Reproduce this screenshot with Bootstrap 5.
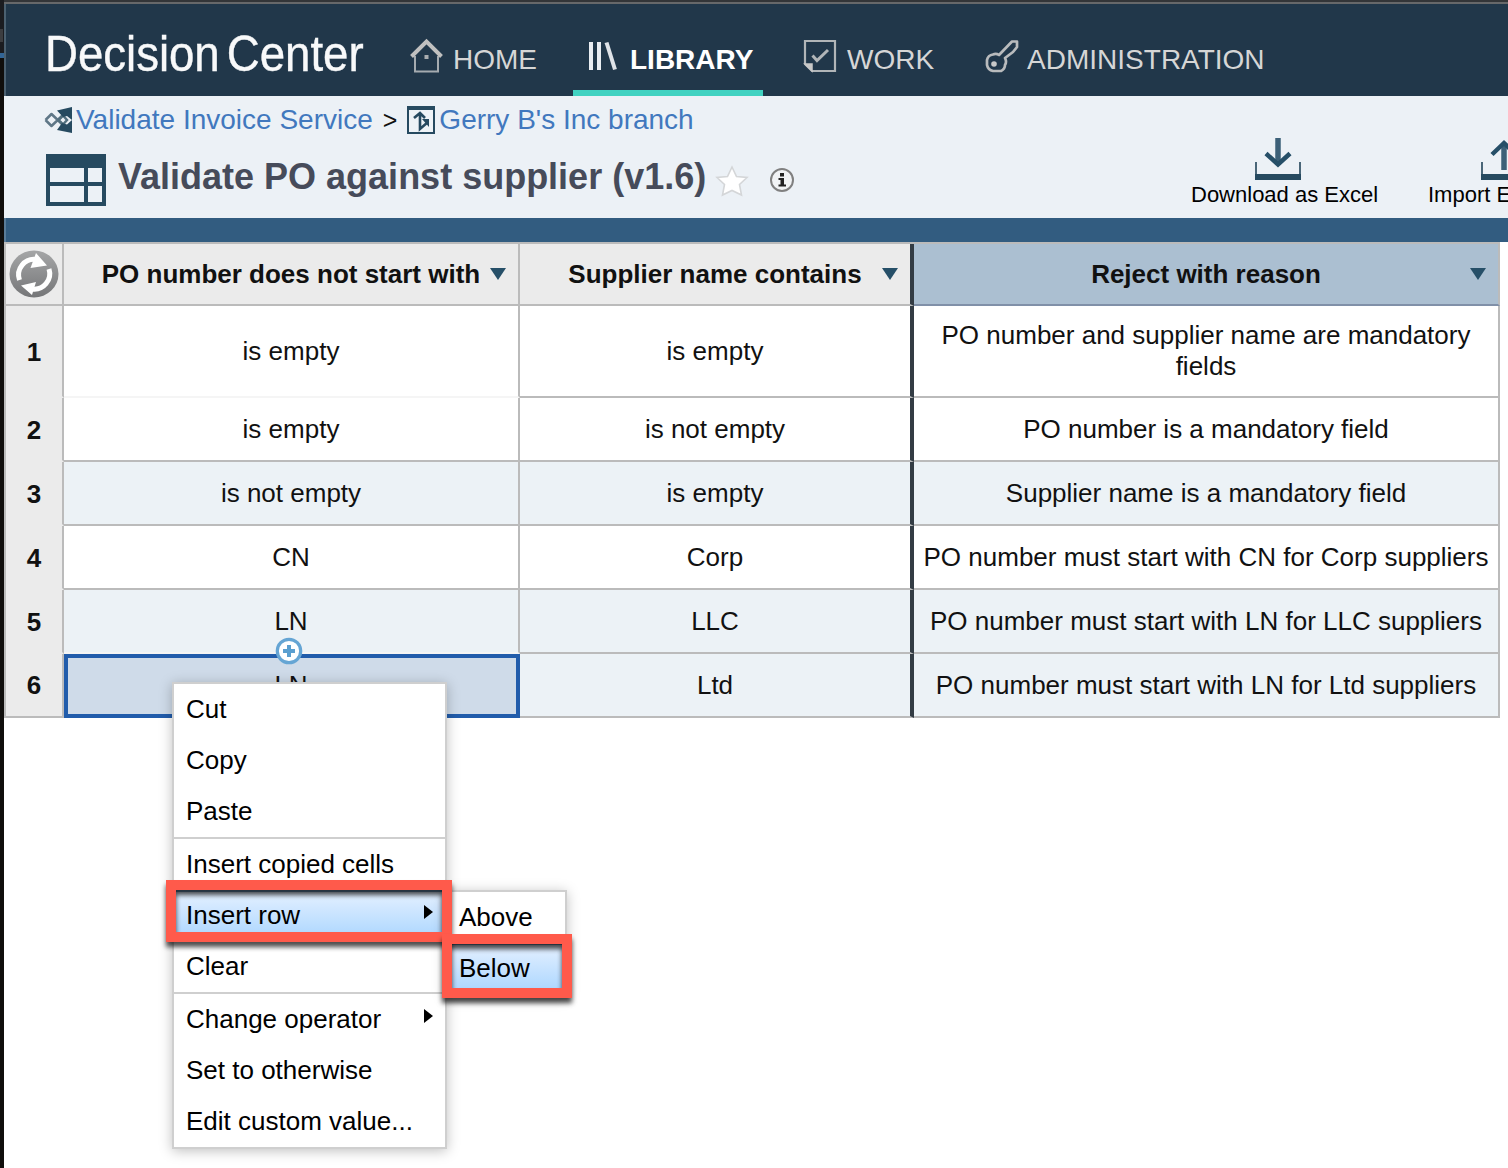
<!DOCTYPE html>
<html lang="en">
<head>
<meta charset="utf-8">
<meta name="viewport" content="width=device-width, initial-scale=1">
<title>Decision Center</title>
<link href="https://cdn.jsdelivr.net/npm/bootstrap@5.3.0/dist/css/bootstrap.min.css" rel="stylesheet">
<script src="https://cdn.jsdelivr.net/npm/bootstrap@5.3.0/dist/js/bootstrap.bundle.min.js"></script>
<style>
html,body{height:1168px;overflow:hidden}
body{font-family:"Liberation Sans",Arial,sans-serif;font-size:26px;line-height:31px;color:#111;background:#fff}
.edge-strip{width:4px;flex:none;background:linear-gradient(#1b1c20 0 53px,#326596 53px 58px,#100e0c 58px)}
.edge-strip i{display:block;width:3px;height:13px;margin-top:29px;background:#3c3d40}
.screen{width:1504px;flex:none;overflow:hidden}
.window-top{height:4px;background:linear-gradient(#333538 0 2px,#67686a 2px)}
.topbar{height:92px;background:#21374a;border-left:2px solid #4b6070}
.brand-name{font-size:50px;line-height:92px;color:#f8f9fa;width:340px;margin-left:38.5px;white-space:nowrap;transform:scaleX(.913);transform-origin:0 50%;letter-spacing:-.05px;word-spacing:-6px;padding-top:4px;height:92px;flex:none;-webkit-text-stroke:.4px #f8f9fa}
.tab{height:92px;font-size:28px;line-height:32px;color:#d6d6d6;text-decoration:none;padding-top:20px;white-space:nowrap;flex:none}
.tab.on{color:#fff;font-weight:700;border-bottom:6px solid #41d2c1;padding-top:26px;margin-left:36px;padding-left:15px;width:190px}
.tab svg{margin-top:-9px}
.heading{height:122px;background:#ecf1f6;padding-left:39px}
.crumbs{height:47px;font-size:28px;line-height:47px}
.crumbs a{color:#4178be;text-decoration:none}
.crumbs .gt{font-size:25px;color:#111;margin:2px 10px 0 10px}
.page-title{font-size:36px;line-height:68px;font-weight:700;color:#464b5a;margin:0;white-space:nowrap}
.tool{font-size:22px;line-height:26px;color:#000;white-space:nowrap}
.band{height:24px;background:#325c80;border-left:2px solid #5a7c98}
.rules{width:1496px;table-layout:fixed;border-collapse:separate;border-spacing:0;border-left:2px solid #bbb;border-top:2px solid #bbb;text-align:center;margin:0}
.rules th,.rules td{padding:0 4px;vertical-align:middle;border:0 solid #bbb;border-width:0 2px 2px 0;height:64px;position:relative;color:#111}
.rules thead th{height:62px;background:#ebebeb}
.rules tbody th{background:#ebebeb;border-bottom-color:#ebebeb;padding-top:2px}
.rules tbody tr:last-child th{border-bottom-color:#bbb;padding-top:0}
.rules .premise{border-right:4px solid #333c44}
.rules thead .action{background:#abbfd1;border-bottom-color:#8090a8}
.rules tr.tall>*{height:92px}
.rules tr.tint td{background:#ecf2f6}
.rules td.soft{border-bottom-color:#f5f5f5}
.rules tr td.picked{border:0;background:#cfdbe9;box-shadow:inset 0 0 0 4px #215cab;padding:0 2px 2px 0}
.drop{position:absolute;right:12px;top:24px;width:16px;height:12px}
.plus{position:absolute;left:211px;top:-17px;width:28px;height:28px}
.ctx{position:absolute;background:#fff;border:2px solid #cfcfcf;color:#000;box-shadow:0 2px 12px rgba(0,0,0,.25)}
.ctx-main{left:172px;top:682px;width:275px}
.ctx-sub{left:445px;top:890px;width:122px}
.ctx-item{height:51px;padding:0 12px;line-height:51px;white-space:nowrap}
.ctx-item.hot{background:linear-gradient(#e4f0ff,#abd6ff);border-top:2px solid #759dc0;border-bottom:2px solid #759dc0;line-height:47px}
.ctx-rule{height:2px;background:#cfcfcf}
.ctx-arrow{width:9px;height:14px;margin-bottom:7px}
.callout{position:absolute;border:10px solid #ff5a4b;filter:drop-shadow(0 5px 2.5px rgba(0,0,0,.7))}
.callout-a{left:166px;top:880px;width:286px;height:62px}
.callout-b{left:442px;top:934px;width:130px;height:64px}
svg{display:block;flex:none}
</style>
</head>
<body class="position-relative d-flex">
<div class="edge-strip"><i></i></div>
<div class="screen">
  <div class="window-top"></div>
  <header class="topbar d-flex">
    <div class="brand-name">Decision Center</div>
    <nav class="d-flex">
      <a href="#" class="tab d-flex align-items-center" style="margin-left:24.5px">
        <svg width="34" height="36" viewBox="0 0 34 36" fill="none" style="margin-right:10px"><path d="M6 18V33.500H29V18" stroke="#a5abb0" stroke-width="2"/><path d="M2.500 18.500 17.500 3.500 32.500 18.500" stroke="#c0c0c0" stroke-width="4"/><rect x="15.500" y="17" width="4" height="4" fill="#a9adb0"/></svg><span>HOME</span></a>
      <a href="#" class="tab on d-flex align-items-center">
        <svg width="30" height="30" viewBox="0 0 30 30" style="margin-right:12px"><path d="M3 1V29M11 1V29" stroke="#e9edf2" stroke-width="4"/><path d="M18.500 1.500 27 28.500" stroke="#dfe3e8" stroke-width="4"/></svg><span>LIBRARY</span></a>
      <a href="#" class="tab d-flex align-items-center" style="margin-left:40px">
        <svg width="34" height="34" viewBox="0 0 34 34" fill="none" style="margin-right:10px"><path d="M2 2H32V32H9L2 25Z" stroke="#b1b5b8" stroke-width="2.200"/><path d="M2 25H9V32Z" fill="#c8c8c8" stroke="#c8c8c8" stroke-width="1.500"/><path d="M9.500 16.500 14 21.500 25 11" stroke="#b1b5b8" stroke-width="3"/></svg><span>WORK</span></a>
      <a href="#" class="tab d-flex align-items-center" style="margin-left:51px">
        <svg width="34" height="34" viewBox="0 0 34 34" fill="none" style="margin-right:8px"><path d="M14 16 27 2.500H32V8L28 13 24 16 20 19Q22 23 20 26Q20 30 16 32H8Q3 31 2 26V21Q3 16 8 15.500Q11 14 14 16Z" stroke="#b9bbbd" stroke-width="2.700" stroke-linejoin="round"/><circle cx="9" cy="25" r="2.800" fill="#c8c8c8"/></svg><span>ADMINISTRATION</span></a>
    </nav>
  </header>

  <section class="heading d-flex">
    <div class="flex-grow-1">
      <div class="crumbs d-flex align-items-center">
        <svg width="29" height="28" viewBox="0 0 29 28" fill="none" style="margin:1px 4px 0 0"><path d="M2.500 14 8.500 8 21 20M2.500 14 8.500 20 21 8" stroke="#5f7787" stroke-width="2.500" stroke-linejoin="round"/><path d="M15.500 14 20 9.500 24 14 20 18.500Z" stroke="#52707f" stroke-width="2.500"/><path d="M14 4.500 29 1V14L24 10 20 11Z" fill="#264a60"/><path d="M14 24 29 27V14L24 18.500 19 17Z" fill="#264a60"/></svg>
        <a href="#">Validate Invoice Service</a><span class="gt">&gt;</span>
        <svg width="28" height="28" viewBox="0 0 28 28" fill="none" style="margin:1px 4px 0 0"><rect x="1" y="1" width="26" height="26" fill="#eef3f7" stroke="#264a60" stroke-width="2"/><path d="M0 2H28" stroke="#264a60" stroke-width="4"/><path d="M7 12 13 7 18 12M13 7V23L21 16" stroke="#264a60" stroke-width="2.600"/><path d="M15 13H22V21Z" fill="#264a60"/></svg>
        <a href="#">Gerry B's Inc branch</a>
      </div>
      <div class="d-flex align-items-center" style="height:68px">
        <svg width="62" height="54" viewBox="0 0 62 54" style="margin:6px 11px 0 2px"><path fill="#264a60" fill-rule="evenodd" d="M1 1H61V53H1ZM5 15V29H39V15ZM43 15V29H57V15ZM5 33V49H39V33ZM43 33V49H57V33Z"/></svg>
        <h1 class="page-title">Validate PO against supplier (v1.6)</h1>
        <svg width="34" height="32" viewBox="0 0 34 32" style="margin:7px 0 0 9px"><path d="M17 2 21.500 11.500 32 12.500 24.500 19.500 26.500 30 17 25.500 7.500 30 9.500 19.500 2 12.500 12.500 11.500Z" fill="#fff" stroke="#d4d6d8" stroke-width="1.600"/></svg>
        <svg width="26" height="26" viewBox="0 0 26 26" style="margin:6px 0 0 20px"><circle cx="13" cy="13" r="11" fill="#f1f3f5" stroke="#808080" stroke-width="2"/><path d="M11 6H15V9.500H11ZM9.500 11H15V17.500H17V19.500H9.500V17.500H11.500V13H9.500Z" fill="#222"/></svg>
      </div>
    </div>
    <div class="tool" style="width:237px;padding-top:42px">
      <svg width="48" height="44" viewBox="0 0 48 44" fill="none" style="margin-left:63px"><path d="M2 24V40M46 24V40" stroke="#4a6678" stroke-width="2"/><path d="M1 39H47" stroke="#264a60" stroke-width="6"/><path d="M24 0V27" stroke="#3c6078" stroke-width="5.500"/><path d="M12 15.500 24 26.500 36 15.500" stroke="#264f68" stroke-width="4.500"/></svg>
      <div>Download as Excel</div>
    </div>
    <div class="tool" style="width:80px;padding-top:42px">
      <svg width="48" height="44" viewBox="0 0 48 44" fill="none" style="margin-left:52px"><path d="M2 24V40M46 24V40" stroke="#4a6678" stroke-width="2"/><path d="M1 39H47" stroke="#264a60" stroke-width="6"/><path d="M24 32V5" stroke="#3c6078" stroke-width="5.500"/><path d="M12 16.500 24 5 36 16.500" stroke="#264f68" stroke-width="4.500"/></svg>
      <div>Import Excel</div>
    </div>
  </section>
  <div class="band"></div>

  <table class="rules">
    <colgroup><col style="width:58px"><col style="width:456px"><col style="width:394px"><col></colgroup>
    <thead>
      <tr>
        <th class="p-0"><svg width="50" height="48" viewBox="0 0 50 48" style="margin:0 0 0 3px"><defs><linearGradient id="g" x1="0" y1="0" x2="0" y2="1"><stop offset="0" stop-color="#a5a6a7"/><stop offset="1" stop-color="#757678"/></linearGradient></defs><ellipse cx="25" cy="24" rx="24.500" ry="23.500" fill="url(#g)"/><path d="M10.500 30A15.500 15.500 0 0 1 27 9.500M40 19A15.500 15.500 0 0 1 23 39" stroke="#fff" stroke-width="5" fill="none"/><path d="M27 3 38 15.500 21.500 18Z M23 45 12 35.500 27 32Z" fill="#fff"/></svg></th>
        <th>PO number does not start with<svg class="drop" viewBox="0 0 16 12"><path d="M0 0H16L8 12Z" fill="#264f68"/></svg></th>
        <th class="premise">Supplier name contains<svg class="drop" viewBox="0 0 16 12"><path d="M0 0H16L8 12Z" fill="#264f68"/></svg></th>
        <th class="action">Reject with reason<svg class="drop" viewBox="0 0 16 12"><path d="M0 0H16L8 12Z" fill="#264f68"/></svg></th>
      </tr>
    </thead>
    <tbody>
      <tr class="tall"><th>1</th><td class="soft">is empty</td><td class="premise">is empty</td><td>PO number and supplier name are mandatory fields</td></tr>
      <tr><th>2</th><td>is empty</td><td class="premise">is not empty</td><td>PO number is a mandatory field</td></tr>
      <tr class="tint"><th>3</th><td>is not empty</td><td class="premise">is empty</td><td>Supplier name is a mandatory field</td></tr>
      <tr><th>4</th><td>CN</td><td class="premise">Corp</td><td>PO number must start with CN for Corp suppliers</td></tr>
      <tr class="tint"><th>5</th><td class="soft">LN</td><td class="premise">LLC</td><td>PO number must start with LN for LLC suppliers</td></tr>
      <tr class="tint"><th>6</th><td class="picked">LN<svg class="plus" viewBox="0 0 28 28"><circle cx="14" cy="14" r="11.700" fill="#fff" stroke="#65a5d4" stroke-width="3.200"/><path d="M14 8V20M8 14H20" stroke="#5a9fd0" stroke-width="4"/></svg></td><td class="premise">Ltd</td><td>PO number must start with LN for Ltd suppliers</td></tr>
    </tbody>
  </table>
</div>

<div class="ctx ctx-main">
  <div class="ctx-item">Cut</div>
  <div class="ctx-item">Copy</div>
  <div class="ctx-item">Paste</div>
  <div class="ctx-rule"></div>
  <div class="ctx-item">Insert copied cells</div>
  <div class="ctx-item hot d-flex justify-content-between align-items-center"><span>Insert row</span><svg class="ctx-arrow" viewBox="0 0 9 14"><path d="M0 0 9 7 0 14Z"/></svg></div>
  <div class="ctx-item">Clear</div>
  <div class="ctx-rule"></div>
  <div class="ctx-item d-flex justify-content-between align-items-center"><span>Change operator</span><svg class="ctx-arrow" viewBox="0 0 9 14"><path d="M0 0 9 7 0 14Z"/></svg></div>
  <div class="ctx-item">Set to otherwise</div>
  <div class="ctx-item">Edit custom value...</div>
</div>
<div class="ctx ctx-sub">
  <div class="ctx-item">Above</div>
  <div class="ctx-item hot">Below</div>
</div>
<div class="callout callout-a"></div>
<div class="callout callout-b"></div>
</body>
</html>
